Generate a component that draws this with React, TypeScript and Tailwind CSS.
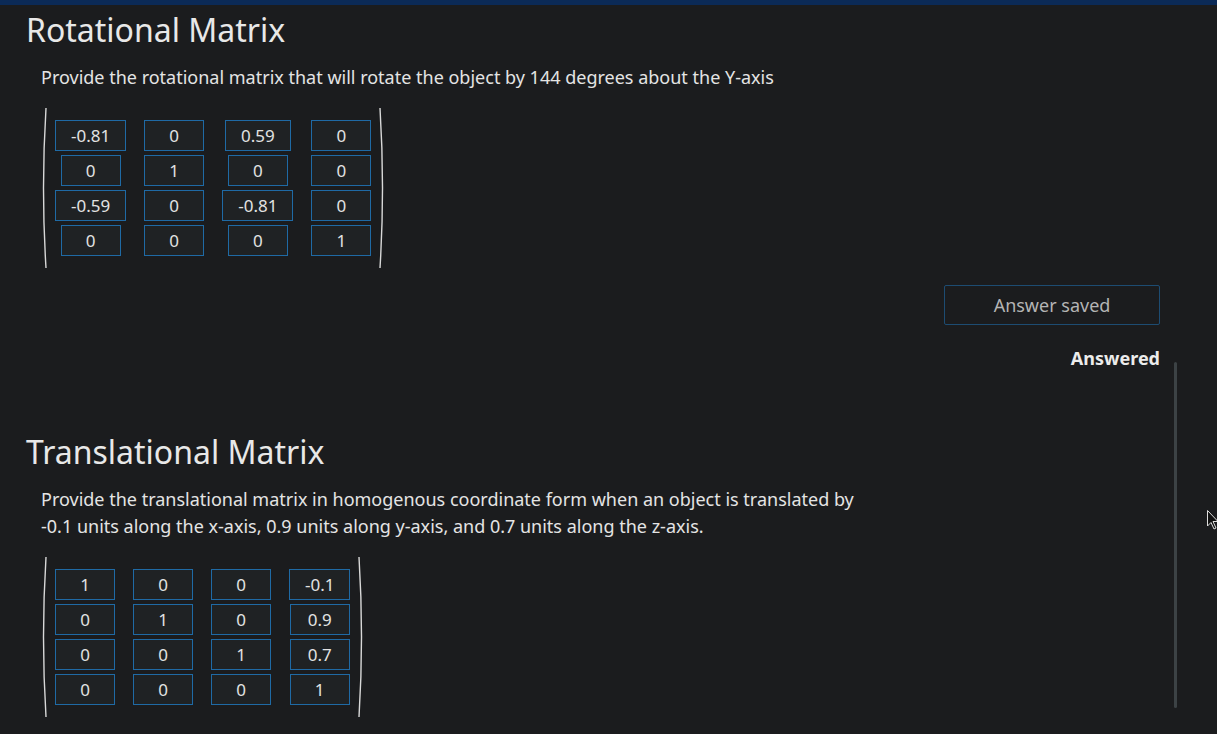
import React from "react";

const rotational = [
  ["-0.81", "0", "0.59", "0"],
  ["0", "1", "0", "0"],
  ["-0.59", "0", "-0.81", "0"],
  ["0", "0", "0", "1"],
];

const translational = [
  ["1", "0", "0", "-0.1"],
  ["0", "1", "0", "0.9"],
  ["0", "0", "1", "0.7"],
  ["0", "0", "0", "1"],
];

function Paren({ side }: { side: "left" | "right" }) {
  const d = side === "left" ? "M5 0 Q0 80 5 160" : "M1 0 Q6 80 1 160";
  return (
    <svg className="w-[6px] self-stretch" viewBox="0 0 6 160" preserveAspectRatio="none">
      <path d={d} fill="none" stroke="#d8d8d8" strokeWidth="1.4" vectorEffect="non-scaling-stroke" />
    </svg>
  );
}

function Matrix({ rows }: { rows: string[][] }) {
  const cols = rows[0].map((_, c) => rows.map((r) => r[c]));
  return (
    <div className="flex items-stretch ml-[41px]">
      <Paren side="left" />
      <div className="flex gap-[18px] py-3 px-[8px]">
        {cols.map((col, ci) => (
          <div key={ci} className="flex flex-col items-center gap-1">
            {col.map((v, ri) => (
              <div
                key={ri}
                className="h-[31px] min-w-[60px] px-[15px] flex items-center justify-center border border-[#1f6aa5] bg-[#1f2224] text-[17px] text-[#e2e2e2]"
              >
                {v}
              </div>
            ))}
          </div>
        ))}
      </div>
      <Paren side="right" />
    </div>
  );
}

export default function App() {
  return (
    <div
      className="relative min-h-[734px] bg-[#1b1c1e] text-[#e4e4e4] overflow-hidden"
      style={{ fontFamily: "'Noto Sans', 'Open Sans', sans-serif" }}
    >
      <div className="h-[5px] bg-[#0b2a57]" />
      <div className="w-[1160px]">
        <h2 className="ml-[26px] mt-[5px] text-[32px] leading-[40px] text-[#e8e8e8]">Rotational Matrix</h2>
        <p className="ml-[41px] mt-[14px] text-[18px] leading-[27px]">
          Provide the rotational matrix that will rotate the object by 144 degrees about the Y-axis
        </p>
        <div className="mt-[17px]">
          <Matrix rows={rotational} />
        </div>
        <div className="flex flex-col items-end mt-[17px]">
          <button className="w-[216px] h-[40px] border border-[#1d4c72] rounded-[2px] text-[18px] text-[#b4b4b4]">
            Answer saved
          </button>
          <div className="mt-[20px] text-[18px] font-bold leading-[27px] text-[#ececec]">Answered</div>
        </div>
        <h2 className="ml-[26px] mt-[60px] text-[32px] leading-[40px] text-[#e8e8e8]">Translational Matrix</h2>
        <p className="ml-[41px] mt-[14px] text-[18px] leading-[27px] w-[820px]">
          Provide the translational matrix in homogenous coordinate form when an object is translated by -0.1 units
          along the x-axis, 0.9 units along y-axis, and 0.7 units along the z-axis.
        </p>
        <div className="mt-[17px]">
          <Matrix rows={translational} />
        </div>
      </div>
      <div className="absolute left-[1174px] top-[362px] w-[3px] h-[346px] rounded-full bg-[#3c4245]" />
      <svg className="absolute left-[1207px] top-[510px]" width="12" height="22" viewBox="0 0 12 22">
        <path d="M0.5 0.5 L0.5 16 L4 12.5 L7 19 L9 18 L6 11.5 L11 11.5 Z" fill="#111" stroke="#ddd" strokeWidth="1" />
      </svg>
    </div>
  );
}
